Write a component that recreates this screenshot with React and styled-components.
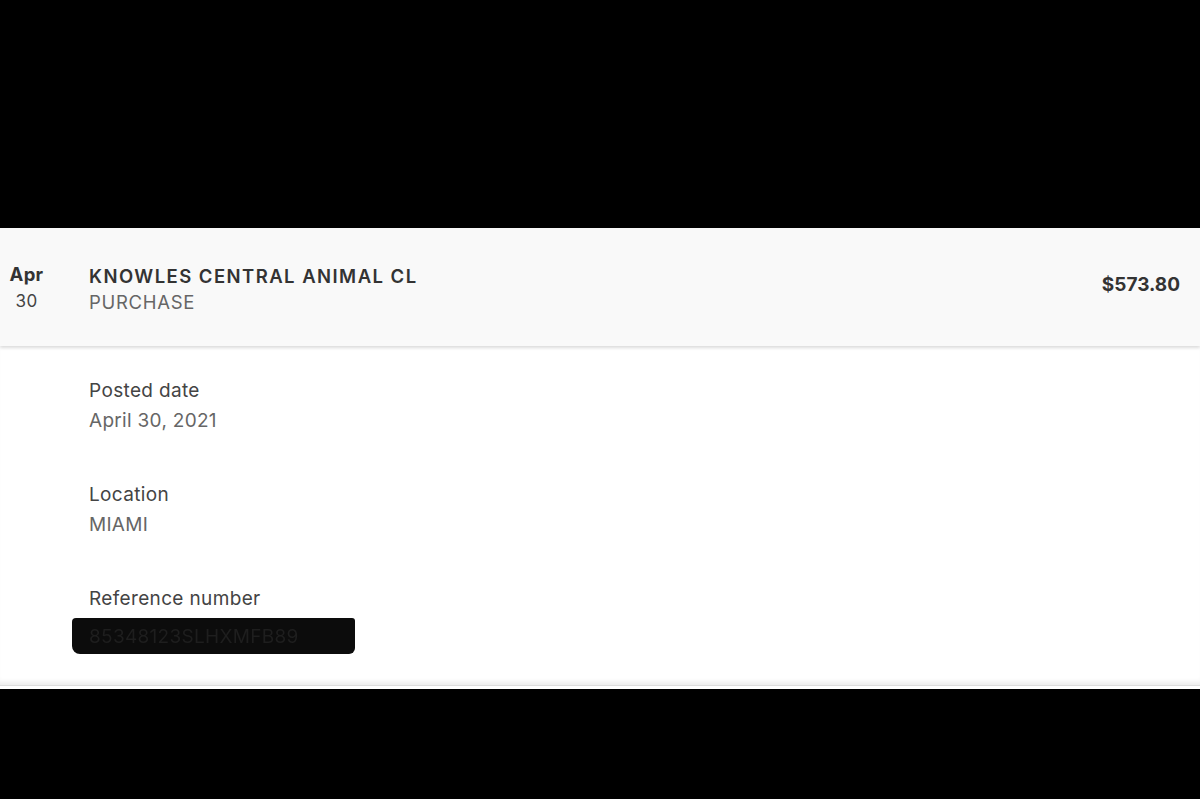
import styled, { createGlobalStyle } from "styled-components";

const GlobalStyle = createGlobalStyle`
  html, body {
    margin: 0;
    padding: 0;
    background: #000;
  }
  body {
    font-family: Inter, "Noto Sans", sans-serif;
    -webkit-font-smoothing: antialiased;
  }
`;

const transaction = {
  month: "Apr",
  day: "30",
  merchant: "KNOWLES CENTRAL ANIMAL CL",
  type: "PURCHASE",
  amount: "$573.80",
  details: [
    { label: "Posted date", value: "April 30, 2021" },
    { label: "Location", value: "MIAMI" },
    { label: "Reference number", value: "85348123SLHXMFB89", redacted: true },
  ],
};

export default function App() {
  return (
    <>
      <GlobalStyle />
      <Page>
        <Panel>
          <Header>
            <DateBox>
              <Month>{transaction.month}</Month>
              <Day>{transaction.day}</Day>
            </DateBox>
            <Merchant>
              <MerchantName>{transaction.merchant}</MerchantName>
              <TxType>{transaction.type}</TxType>
            </Merchant>
            <Amount>{transaction.amount}</Amount>
          </Header>
          <Details>
            {transaction.details.map((d) => (
              <Field key={d.label}>
                <Label>{d.label}</Label>
                <Value $redacted={d.redacted}>{d.value}</Value>
              </Field>
            ))}
          </Details>
        </Panel>
      </Page>
    </>
  );
}

// black letterbox above and below the card
const Page = styled.div`
  width: 1200px;
  height: 799px;
  padding-top: 228px;
  box-sizing: border-box;
  background: #000;
`;

const Panel = styled.div`
  background: #fff;
  padding-bottom: 3px;
`;

const Header = styled.div`
  display: grid;
  grid-template-columns: 53px 1fr auto;
  column-gap: 36px;
  align-items: center;
  height: 118px;
  padding-right: 20px;
  background: #f9f9f9;
  box-shadow: 0 2px 3px rgba(0, 0, 0, 0.14);
  position: relative;
`;

const DateBox = styled.div`
  display: flex;
  flex-direction: column;
  align-items: center;
  margin-top: 2px;
`;

const Month = styled.div`
  font-size: 18.5px;
  font-weight: 700;
  letter-spacing: 0.3px;
  color: #333;
  line-height: 27px;
`;

const Day = styled.div`
  font-size: 17px;
  letter-spacing: 0.5px;
  color: #444;
  line-height: 27px;
`;

const Merchant = styled.div`
  display: flex;
  flex-direction: column;
  margin-top: 3px;
`;

const MerchantName = styled.div`
  font-size: 18.5px;
  font-weight: 600;
  letter-spacing: 1.45px;
  color: #333;
  line-height: 26px;
`;

const TxType = styled.div`
  font-size: 18.5px;
  letter-spacing: 0.7px;
  color: #666;
  line-height: 26px;
`;

const Amount = styled.div`
  font-size: 19px;
  font-weight: 700;
  color: #333;
  margin-top: -5px;
`;

const Details = styled.div`
  display: flex;
  flex-direction: column;
  gap: 48px;
  padding: 32px 0 31px 89px;
  box-shadow: inset 0 -6px 5px -3px rgba(0, 0, 0, 0.08);
  border-bottom: 1px solid #ddd;
`;

const Field = styled.div`
  display: flex;
  flex-direction: column;
  gap: 4px;
`;

const Label = styled.div`
  font-size: 19px;
  letter-spacing: 0.35px;
  color: #444;
  line-height: 26px;
`;

// hand-blacked-out value, as in the photo
const Value = styled.div`
  font-size: 19px;
  letter-spacing: 0.3px;
  line-height: 26px;
  color: ${(p) => (p.$redacted ? "#1e1e1e" : "#666")};
  ${(p) =>
    p.$redacted &&
    `
    align-self: flex-start;
    background: #0c0c0c;
    margin: 2px 0 0 -17px;
    padding: 6px 56px 4px 17px;
    border-radius: 4px 3px 6px 8px;
    filter: blur(0.6px);
  `}
`;
